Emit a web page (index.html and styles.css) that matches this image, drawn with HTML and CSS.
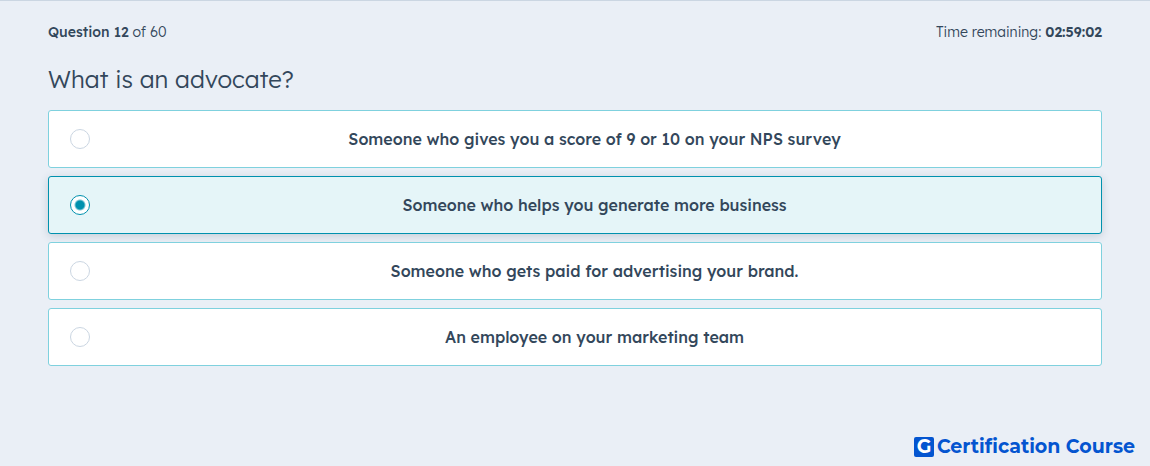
FILE: index.html
```html
<!DOCTYPE html>
<html lang="en">
<head>
<meta charset="utf-8">
<meta name="viewport" content="width=device-width, initial-scale=1">
<title>Question 12 of 60</title>
<link rel="stylesheet" href="styles.css">
</head>
<body class="page">
<main class="quiz">
  <header class="status">
    <p class="status-text"><strong class="status-count">Question 12</strong> of 60</p>
    <p class="status-text">Time remaining: <strong class="status-time">02:59:02</strong></p>
  </header>
  <form>
    <fieldset class="question">
      <legend class="question-title">What is an advocate?</legend>
      <div class="options">
        <label class="option"><input class="option-radio" type="radio" name="answer"><span class="option-text">Someone who gives you a score of 9 or 10 on your NPS survey</span></label>
        <label class="option"><input class="option-radio" type="radio" name="answer" checked><span class="option-text">Someone who helps you generate more business</span></label>
        <label class="option"><input class="option-radio" type="radio" name="answer"><span class="option-text">Someone who gets paid for advertising your brand.</span></label>
        <label class="option"><input class="option-radio" type="radio" name="answer"><span class="option-text">An employee on your marketing team</span></label>
      </div>
    </fieldset>
  </form>
</main>
<footer class="brand"><span class="brand-mark">G</span><span>Certification Course</span></footer>
</body>
</html>
```
FILE: styles.css
```css
* {
  box-sizing: border-box;
}

.page {
  display: flex;
  flex-direction: column;
  justify-content: space-between;
  min-height: 100vh;
  margin: 0;
  border-top: 1px solid #cbd6e2;
  background: #eaeff6;
  color: #33475b;
  font-family: Lexend, Inter, sans-serif;
}

.quiz {
  padding: 19px 48px 32px;
}

.status {
  display: flex;
  justify-content: space-between;
  gap: 16px;
}

.status-text {
  margin: 0;
  font-size: 14px;
  font-weight: 300;
  line-height: 24px;
}

.status-count {
  font-weight: 500;
}

.status-time {
  font-weight: 600;
}

.question {
  min-width: 0;
  margin: 0;
  padding: 0;
  border: 0;
}

.question-title {
  padding: 18px 0 14px;
  font-size: 24px;
  font-weight: 300;
  line-height: 34px;
}

.options {
  display: grid;
  gap: 8px;
}

.option {
  display: flex;
  align-items: center;
  gap: 18px;
  min-height: 58px;
  padding: 16px 20px 16px 21px;
  border: 1px solid #7fd1de;
  border-radius: 3px;
  background: #fff;
  cursor: pointer;
}

.option:has(:checked) {
  border-color: #0091ae;
  background: #e5f5f8;
  box-shadow: 0 2px 8px rgba(51, 71, 91, 0.2);
}

.option-radio {
  flex: none;
  width: 20px;
  height: 20px;
  margin: 0;
  border: 1px solid #cbd6e2;
  border-radius: 50%;
  appearance: none;
  background: #fff;
}

.option-radio:checked {
  border-color: #0091ae;
  background: radial-gradient(circle, #0091ae 4px, #fff 6px);
}

.option-text {
  flex: 1;
  font-size: 16px;
  font-weight: 500;
  line-height: 24px;
  text-align: center;
}

.brand {
  display: flex;
  align-items: center;
  justify-content: flex-end;
  gap: 3px;
  padding: 0 15px 7px;
  color: #0455d0;
  font-family: Montserrat, "DejaVu Sans", sans-serif;
  font-size: 19px;
  font-weight: 700;
  line-height: 24px;
}

.brand-mark {
  width: 20px;
  height: 20px;
  border-radius: 2px;
  background: #0455d0;
  color: #fff;
  line-height: 20px;
  text-align: center;
}
```
